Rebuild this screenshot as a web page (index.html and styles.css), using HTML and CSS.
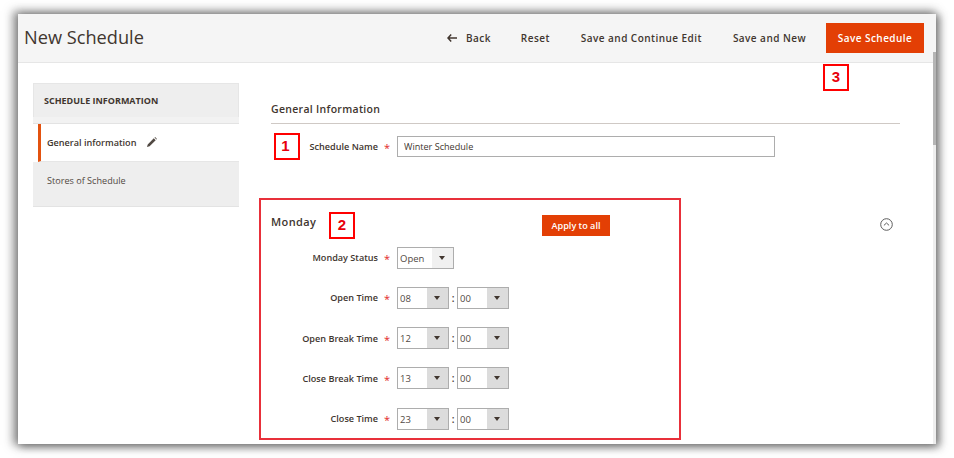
FILE: index.html
```html
<!DOCTYPE html>
<html lang="en">
<head>
    <title>New Schedule</title>
    <link rel="stylesheet" href="styles.css">
</head>
<body>
    <div class="window">
        <!-- Header -->
        <header class="page-head">
            <h1>New Schedule</h1>
            <nav class="actions">
                <a class="action back"><svg width="10" height="8" viewBox="0 0 10 8"><path d="M4.2.6 1 4l3.2 3.4M1 4h9" fill="none" stroke="#41362f" stroke-width="1.5"/></svg>Back</a>
                <a class="action reset">Reset</a>
                <a class="action cont">Save and Continue Edit</a>
                <a class="action new">Save and New</a>
                <button class="btn-save">Save Schedule</button>
            </nav>
        </header>

        <div class="content">
            <!-- Sidebar -->
            <aside class="side">
                <div class="side-title">SCHEDULE INFORMATION</div>
                <div class="side-gap"></div>
                <div class="side-item active">General information
                    <svg width="10" height="10" viewBox="0 0 10 10"><path d="M0 10l.7-2.600L6.800 1.300 8.700 3.200 2.600 9.300zM7.500.6 8.100 0 10 1.900l-.6.6z" fill="#514943"/></svg>
                </div>
                <div class="side-item">Stores of Schedule</div>
            </aside>

            <!-- Form -->
            <main class="main">
                <h2 class="sec-title">General Information</h2>
                <div class="row name-row">
                    <label>Schedule Name</label><span class="req">*</span>
                    <input class="text" type="text" value="Winter Schedule">
                </div>

                <section class="day">
                    <div class="day-head">
                        <h3>Monday</h3>
                        <button class="btn-apply">Apply to all</button>
                        <svg class="collapse" width="13" height="13" viewBox="0 0 13 13"><circle cx="6.500" cy="6.500" r="5.800" fill="none" stroke="#5c5c5c"/><path d="M3.900 7.400 6.500 5l2.600 2.400" fill="none" stroke="#5c5c5c"/></svg>
                    </div>
                    <div class="row">
                        <label>Monday Status</label><span class="req">*</span>
                        <div class="sel sel-status"><span>Open</span><i></i></div>
                    </div>
                    <div class="row">
                        <label>Open Time</label><span class="req">*</span>
                        <div class="sel"><span>08</span><i></i></div><b>:</b><div class="sel sel-min"><span>00</span><i></i></div>
                    </div>
                    <div class="row">
                        <label>Open Break Time</label><span class="req">*</span>
                        <div class="sel"><span>12</span><i></i></div><b>:</b><div class="sel sel-min"><span>00</span><i></i></div>
                    </div>
                    <div class="row">
                        <label>Close Break Time</label><span class="req">*</span>
                        <div class="sel"><span>13</span><i></i></div><b>:</b><div class="sel sel-min"><span>00</span><i></i></div>
                    </div>
                    <div class="row">
                        <label>Close Time</label><span class="req">*</span>
                        <div class="sel"><span>23</span><i></i></div><b>:</b><div class="sel sel-min"><span>00</span><i></i></div>
                    </div>
                </section>
            </main>
        </div>

        <div class="scroll-track"></div>
        <div class="scroll-thumb"></div>
    </div>

    <!-- Annotations over the screenshot -->
    <div class="mark mark-1">1</div>
    <div class="mark mark-2">2</div>
    <div class="mark mark-3">3</div>
    <div class="mark-box"></div>
</body>
</html>
```

FILE: styles.css
```css
* {
    margin: 0;
    padding: 0;
    box-sizing: border-box;
    font-family: "Open Sans", sans-serif;
}

body {
    width: 954px;
    height: 458px;
    background-color: #fff;
    color: #41362f;
    overflow: hidden;
    position: relative;
}

.window {
    position: relative;
    width: 918px;
    height: 430px;
    margin: 14px 0 0 18px;
    background-color: #fff;
    overflow: hidden;
}

body::before {
    content: "";
    position: absolute;
    left: 18px;
    top: 14px;
    width: 918px;
    height: 430px;
    box-shadow: -3px -1px 9px 2px rgba(60, 60, 60, 0.55), 3px 2px 8px 1px rgba(60, 60, 60, 0.55);
}

/* Header */
.page-head {
    height: 49px;
    background-color: #f5f5f5;
    border-bottom: 1px solid #e6e6e6;
    display: flex;
    align-items: center;
    justify-content: space-between;
    padding: 0 12px 1px 6px;
}

h1 {
    font-size: 18.200px;
    font-weight: 400;
    color: #41362f;
    padding-bottom: 2px;
}

.actions {
    display: flex;
    align-items: center;
}

.action {
    font-size: 10px;
    font-weight: 600;
    letter-spacing: 0.45px;
    color: #41362f;
}

.back svg {
    margin-right: 9px;
}

.back { margin-right: 30px; }
.reset { margin-right: 31px; }
.cont { margin-right: 31px; }
.new { margin-right: 20px; }

.btn-save {
    width: 98px;
    height: 30px;
    background-color: #e33f05;
    border: none;
    color: #fff;
    font-size: 10px;
    font-weight: 600;
    letter-spacing: 0.45px;
}

/* Layout */
.content {
    display: flex;
    padding: 20px 0 0 15px;
}

.side {
    width: 206px;
    flex-shrink: 0;
}

.side-title {
    height: 34px;
    line-height: 33px;
    background-color: #eee;
    border: 1px solid #e6e6e6;
    border-bottom: none;
    padding-left: 10px;
    font-size: 9px;
    font-weight: 700;
    color: #41362f;
}

.side-gap {
    height: 7px;
    background-color: #f2f2f2;
    border-bottom: 1px solid #e3e3e3;
}

.side-item {
    height: 45px;
    background-color: #eee;
    font-size: 9.100px;
    color: #514943;
    padding: 12px 0 0 14px;
}

.side-item.active {
    height: 38px;
    margin-left: 5px;
    padding: 12px 0 0 6px;
    background-color: #fff;
    border-left: 3px solid #e3520f;
    border-bottom: 1px solid #e6e6e6;
    color: #41362f;
    font-weight: 600;
}

.side-item.active svg {
    margin-left: 8px;
    vertical-align: -1px;
}

.side-item:last-child {
    border-bottom: 1px solid #e3e3e3;
}

.main {
    width: 629px;
    margin-left: 32px;
    padding-top: 19px;
}

.sec-title {
    font-size: 10.500px;
    font-weight: 600;
    letter-spacing: 0.3px;
    line-height: 15px;
    padding-bottom: 6px;
    border-bottom: 1px solid #cfc9c5;
}

/* Rows */
.row {
    display: flex;
    align-items: center;
    height: 21px;
    margin-bottom: 19.250px;
}

.row label {
    width: 107px;
    text-align: right;
    font-size: 9.100px;
    font-weight: 600;
    color: #41362f;
}

.req {
    width: 19px;
    padding-left: 6px;
    color: #e22626;
    font-size: 11px;
    line-height: 21px;
    padding-top: 2px;
}

.name-row {
    margin-top: 12px;
    margin-bottom: 0;
}

.text {
    width: 378px;
    height: 21px;
    border: 1px solid #adadad;
    padding: 0 6px;
    font-size: 9.100px;
    color: #41362f;
}

.day {
    margin-top: 58px;
}

.day-head {
    position: relative;
    display: flex;
    align-items: center;
    height: 21px;
    margin-bottom: 11px;
}

.day-head h3 {
    font-size: 11px;
    font-weight: 600;
    letter-spacing: 0.4px;
    width: 271px;
    padding-bottom: 9px;
}

.btn-apply {
    width: 68px;
    height: 21px;
    background-color: #e33f05;
    border: none;
    color: #fff;
    font-size: 9.100px;
    font-weight: 600;
}

.collapse {
    margin-left: 270px;
    margin-bottom: 2px;
}

/* Fake selects */
.sel {
    width: 52px;
    height: 22px;
    display: flex;
    background-color: #fff;
    border: 1px solid #adadad;
    font-size: 9.500px;
    color: #514943;
}

.sel span {
    flex: 1;
    padding: 4px 0 0 2px;
}

.sel i {
    width: 21px;
    background-color: #dcdcdc;
    position: relative;
}

.sel i::after {
    content: "";
    position: absolute;
    left: 7px;
    top: 8px;
    border-left: 3px solid transparent;
    border-right: 3px solid transparent;
    border-top: 4px solid #41362f;
}

.sel-status {
    width: 57px;
}

.sel-status i {
    background-color: #f0f0f0;
}

.row b {
    width: 8px;
    text-align: center;
    font-size: 10px;
    font-weight: 600;
}

.scroll-track {
    position: absolute;
    right: 0;
    top: 38px;
    bottom: 0;
    width: 3px;
    background-color: #eee;
}

.scroll-thumb {
    position: absolute;
    right: 0;
    top: 38px;
    width: 3px;
    height: 93px;
    background-color: #b5b5b5;
}

/* Annotations */
.mark {
    position: absolute;
    width: 26px;
    height: 27px;
    background-color: #fff;
    border: 2px solid #f00;
    color: #e8000b;
    font-family: "Liberation Sans", Arial, sans-serif;
    font-size: 15px;
    font-weight: 700;
    line-height: 21px;
    text-align: center;
}

.mark-1 { left: 274px; top: 133px; padding-right: 3px; }
.mark-2 { left: 329px; top: 212px; }
.mark-3 { left: 823px; top: 64px; }

.mark-box {
    position: absolute;
    left: 259px;
    top: 198px;
    width: 422px;
    height: 242px;
    border: 2px solid #e8303a;
}
```
